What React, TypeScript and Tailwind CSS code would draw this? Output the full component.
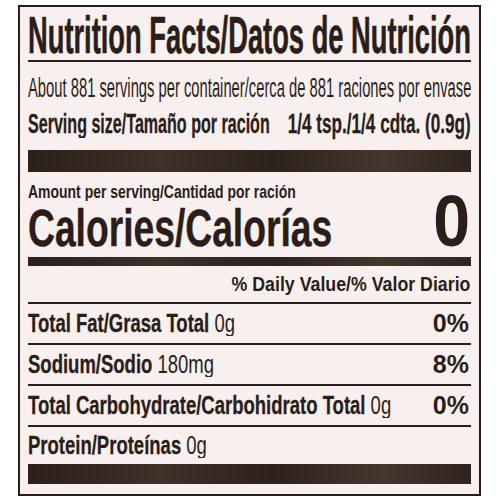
import type { ReactNode } from 'react'

interface NutrientRow {
  name: string
  amount: string
  dv?: string
}

const rows: NutrientRow[] = [
  { name: 'Total Fat/Grasa Total', amount: '0g', dv: '0%' },
  { name: 'Sodium/Sodio', amount: '180mg', dv: '8%' },
  { name: 'Total Carbohydrate/Carbohidrato Total', amount: '0g', dv: '0%' },
  { name: 'Protein/Proteínas', amount: '0g' },
]

// label text is set in a squeezed face; the squeeze differs line by line
function Squeeze({ children, className }: { children: ReactNode; className: string }) {
  return <span className={`inline-block whitespace-nowrap ${className}`}>{children}</span>
}

function Bar({ className }: { className: string }) {
  return (
    <div
      className={`w-full bg-[#33251f] bg-[linear-gradient(90deg,#2c201a_0%,#3f3028_30%,#2e221c_55%,#45362d_80%,#30241e_100%)] ${className}`}
    />
  )
}

export default function App() {
  return (
    <div className="w-[500px] h-[500px] overflow-hidden bg-white pt-[5px] pl-[18px] font-['Liberation_Sans',Arial,sans-serif] text-[#2b1e18]">
      <div className="w-[463px] h-[491px] border-2 border-[#2b1e18] bg-[#f8f0ef] px-[8px] pt-[2px] flex flex-col">
        {/* title */}
        <div className="h-[51px] text-[52px] leading-[52px] font-bold overflow-hidden">
          <Squeeze className="origin-left scale-x-[0.525] [-webkit-text-stroke:0.6px_#2b1e18]">
            Nutrition Facts/Datos de Nutrición
          </Squeeze>
        </div>
        <div className="h-[2px] bg-[#2b1e18]" />

        <div className="mt-[13px] h-[27px] text-[27px] leading-[27px] overflow-hidden">
          <Squeeze className="origin-left scale-x-[0.547]">
            About 881 servings per container/cerca de 881 raciones por envase
          </Squeeze>
        </div>
        <div className="mt-[8px] h-[28px] text-[28px] leading-[28px] font-bold flex [-webkit-text-stroke:0.3px_#2b1e18]">
          <div className="flex-1 min-w-0 overflow-hidden">
            <Squeeze className="origin-left scale-x-[0.574]">Serving size/Tamaño por ración</Squeeze>
          </div>
          <div className="w-[186px] shrink-0 flex justify-end">
            <Squeeze className="origin-right scale-x-[0.613]">1/4 tsp./1/4 cdta. (0.9g)</Squeeze>
          </div>
        </div>

        <Bar className="mt-[12px] h-[22px]" />

        <div className="mt-[11px] h-[18px] text-[18px] leading-[18px] font-bold overflow-hidden">
          <Squeeze className="origin-left scale-x-[0.776]">Amount per serving/Cantidad por ración</Squeeze>
        </div>
        <div className="mt-[2px] h-[50px] flex items-baseline font-bold">
          <div className="flex-1 min-w-0 text-[51px] leading-[50px]">
            <Squeeze className="origin-left scale-x-[0.73] [-webkit-text-stroke:0.4px_#2b1e18]">
              Calories/Calorías
            </Squeeze>
          </div>
          <div className="w-[44px] shrink-0 flex justify-end text-[72px] leading-[37px] pr-[1px]">
            <Squeeze className="origin-right scale-x-[0.92]">0</Squeeze>
          </div>
        </div>
        <Bar className="mt-[4px] h-[9px]" />

        <div className="mt-[7px] h-[21px] text-[21px] leading-[21px] font-bold text-right pr-[1px]">
          <Squeeze className="origin-right scale-x-[0.846]">% Daily Value/% Valor Diario</Squeeze>
        </div>
        <div className="mt-[8px] h-[2px] bg-[#2b1e18]" />

        {rows.map((row, i) => (
          <div key={row.name}>
            <div
              className={
                i === rows.length - 1
                  ? 'h-[37px] flex items-center text-[25px] leading-[25px]'
                  : 'h-[39px] flex items-center text-[25px] leading-[25px]'
              }
            >
              <div className="flex-1 min-w-0 overflow-hidden">
                <Squeeze className="origin-left scale-x-[0.74]">
                  <span className="font-bold [-webkit-text-stroke:0.3px_#2b1e18]">{row.name}</span> {row.amount}
                </Squeeze>
              </div>
              {row.dv && <div className="shrink-0 font-bold pr-[2px]">{row.dv}</div>}
            </div>
            {i < rows.length - 1 && <div className="h-[2px] bg-[#2b1e18]" />}
          </div>
        ))}

        <Bar className="h-[20px]" />
      </div>
    </div>
  )
}
